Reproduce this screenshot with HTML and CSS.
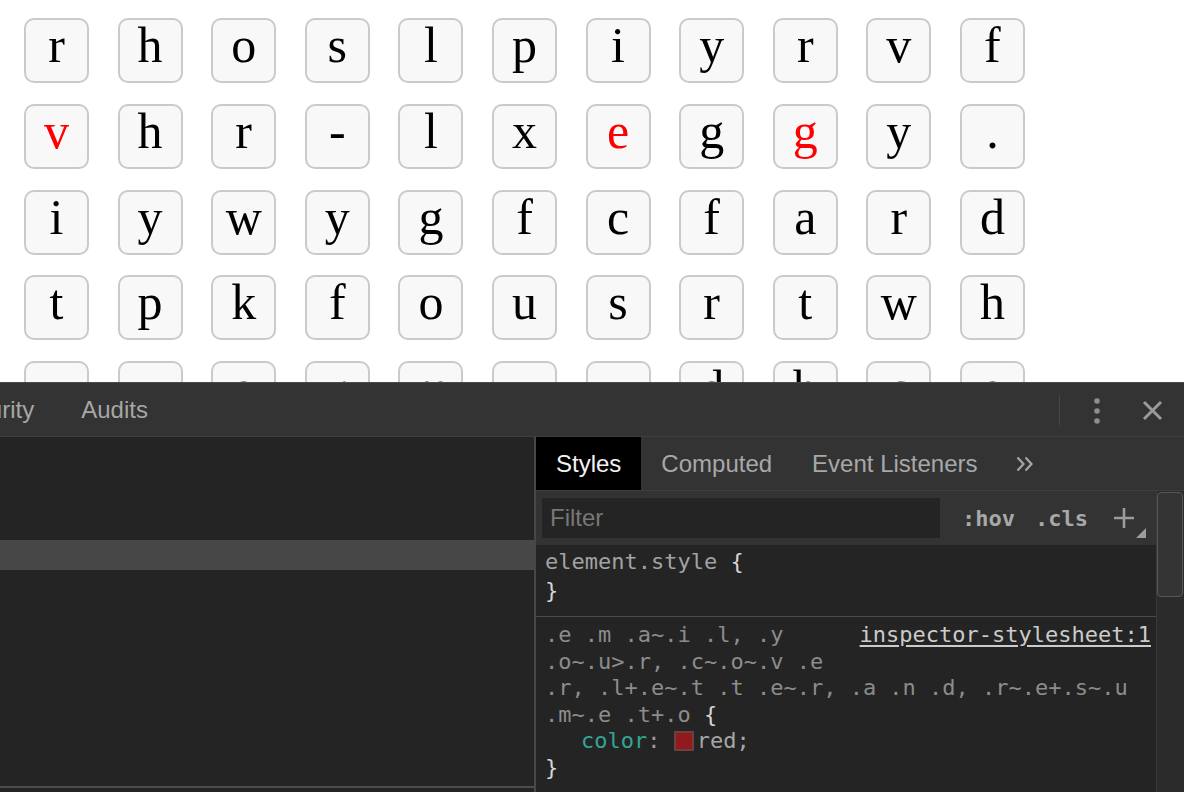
FILE: index.html
```html
<!DOCTYPE html>
<html>
<head>
<meta charset="utf-8">
<link rel="stylesheet" href="styles.css">
</head>
<body>
<div class="viewport">
  <div class="board">
    <div class="tile">r</div><div class="tile">h</div><div class="tile">o</div><div class="tile">s</div><div class="tile">l</div><div class="tile">p</div><div class="tile">i</div><div class="tile">y</div><div class="tile">r</div><div class="tile">v</div><div class="tile">f</div>
    <div class="tile hit">v</div><div class="tile">h</div><div class="tile">r</div><div class="tile">-</div><div class="tile">l</div><div class="tile">x</div><div class="tile hit">e</div><div class="tile">g</div><div class="tile hit">g</div><div class="tile">y</div><div class="tile">.</div>
    <div class="tile">i</div><div class="tile">y</div><div class="tile">w</div><div class="tile">y</div><div class="tile">g</div><div class="tile">f</div><div class="tile">c</div><div class="tile">f</div><div class="tile">a</div><div class="tile">r</div><div class="tile">d</div>
    <div class="tile">t</div><div class="tile">p</div><div class="tile">k</div><div class="tile">f</div><div class="tile">o</div><div class="tile">u</div><div class="tile">s</div><div class="tile">r</div><div class="tile">t</div><div class="tile">w</div><div class="tile">h</div>
    <div class="tile">x</div><div class="tile">u</div><div class="tile">o</div><div class="tile">r</div><div class="tile">m</div><div class="tile">v</div><div class="tile">y</div><div class="tile">d</div><div class="tile">h</div><div class="tile">c</div><div class="tile">o</div>
  </div>
</div>
<div class="devtools">
  <div class="mainbar">
    <div class="mtabs">
      <div class="mtab first">Security</div>
      <div class="mtab">Audits</div>
    </div>
    <div class="tools">
      <div class="sep"></div>
      <div class="kebab">
        <svg width="10" height="30" viewBox="0 0 10 30"><circle cx="5" cy="5" r="2.8" fill="#8e8e8e"/><circle cx="5" cy="15" r="2.8" fill="#8e8e8e"/><circle cx="5" cy="25" r="2.8" fill="#8e8e8e"/></svg>
      </div>
      <div class="close">
        <svg width="21" height="21" viewBox="0 0 21 21"><path d="M2 2 L19 19 M19 2 L2 19" stroke="#9a9a9a" stroke-width="3" fill="none"/></svg>
      </div>
    </div>
  </div>
  <div class="panes">
    <div class="left">
      <div class="lgap"></div>
      <div class="lrow"></div>
      <div class="lfill"></div>
      <div class="lfoot"></div>
    </div>
    <div class="right">
      <div class="subtabs">
        <div class="stab on">Styles</div>
        <div class="stab">Computed</div>
        <div class="stab">Event Listeners</div>
        <div class="more">
          <svg width="18" height="16" viewBox="0 0 18 16"><path d="M1.5 1.5 L7.5 8 L1.5 14.5 M9.5 1.5 L15.5 8 L9.5 14.5" stroke="#a6a6a6" stroke-width="2.2" fill="none"/></svg>
        </div>
      </div>
      <div class="stylebody">
        <div class="stylecol">
          <div class="toolbar">
            <div class="filter">Filter</div>
            <div class="pseudo">:hov</div>
            <div class="pseudo cls">.cls</div>
            <div class="plus">
              <svg width="34" height="42" viewBox="0 0 34 42"><path d="M11 11 V31 M1 21 H21" stroke="#9c9c9c" stroke-width="2.6" fill="none"/><path d="M33 31 V41 H23 Z" fill="#9c9c9c"/></svg>
            </div>
          </div>
          <div class="sec sec1">
            <div><span class="elem">element.style</span> <span class="brace">{</span></div>
            <div><span class="brace">}</span></div>
          </div>
          <div class="sec sec2">
            <div class="firstline"><span class="sel">.e .m .a~.i .l, .y</span><span class="link">inspector-stylesheet:1</span></div>
            <div class="sel">.o~.u&gt;.r, .c~.o~.v .e</div>
            <div class="sel">.r, .l+.e~.t .t .e~.r, .a .n .d, .r~.e+.s~.u</div>
            <div><span class="sel">.m~.e .t+.o</span> <span class="brace">{</span></div>
            <div class="decl"><span class="prop">color</span><span class="colon">:&nbsp;</span><span class="swatch"></span><span class="val">red;</span></div>
            <div><span class="brace">}</span></div>
          </div>
        </div>
        <div class="scroll"><div class="thumb"></div></div>
      </div>
    </div>
  </div>
</div>
</body>
</html>
```
FILE: styles.css
```css
* { box-sizing: border-box; }
html, body { margin: 0; padding: 0; }
body {
  width: 1184px;
  height: 792px;
  overflow: hidden;
  background: #fff;
  display: flex;
  flex-direction: column;
}
.viewport {
  height: 382px;
  flex: none;
  overflow: hidden;
}
.board {
  display: grid;
  grid-template-columns: repeat(11, 65px);
  grid-auto-rows: 65px;
  column-gap: 28.6px;
  row-gap: 20.75px;
  padding: 18px 0 0 24px;
}
.tile {
  border: 2px solid #cacaca;
  border-radius: 10px;
  background: #f8f8f8;
  font-family: "Liberation Serif", "Times New Roman", serif;
  font-size: 50px;
  line-height: 51px;
  text-align: center;
  color: #000;
}
.tile.hit { color: #ff0000; }

.devtools {
  flex: 1;
  display: flex;
  flex-direction: column;
  background: #242424;
  border-top: 1px solid #4b4b4b;
  font-family: "Liberation Sans", Arial, sans-serif;
  font-size: 24px;
  min-height: 0;
}
.mainbar {
  height: 54px;
  flex: none;
  background: #333;
  border-bottom: 1px solid #3e3e3e;
  display: flex;
  align-items: center;
  color: #a6a6a6;
  white-space: nowrap;
}
.mtabs { display: flex; overflow: hidden; }
.mtab { padding: 0 23.5px; flex: none; }
.mtab.first { margin-left: -76px; }
.tools {
  margin-left: auto;
  display: flex;
  align-items: center;
  margin-right: 10px;
}
.sep { width: 1px; height: 30px; background: #474747; margin-right: 11px; }
.kebab { width: 52px; height: 40px; display: flex; align-items: center; justify-content: center; padding-top: 3px; }
.close { width: 44px; height: 40px; margin-left: 7px; display: flex; align-items: center; justify-content: center; padding-top: 1px; }

.panes { flex: 1; display: flex; min-height: 0; }
.left {
  width: 536px;
  flex: none;
  border-right: 2px solid #474747;
  display: flex;
  flex-direction: column;
}
.lgap { height: 103px; flex: none; }
.lrow { height: 30px; flex: none; background: #474747; }
.lfill { flex: 1; }
.lfoot { height: 6px; flex: none; border-top: 2px solid #4d4d4d; }

.right { flex: 1; display: flex; flex-direction: column; min-width: 0; }
.subtabs {
  height: 54px;
  flex: none;
  background: #333;
  border-bottom: 1px solid #3e3e3e;
  display: flex;
  align-items: stretch;
  white-space: nowrap;
}
.stab { padding: 0 20px; display: flex; align-items: center; color: #a8a8a8; }
.stab.on { background: #000; color: #f2f2f2; }
.more { display: flex; align-items: center; padding-left: 18px; }

.stylebody { flex: 1; display: flex; min-height: 0; }
.stylecol { flex: 1; display: flex; flex-direction: column; min-width: 0; }
.scroll {
  width: 28px;
  flex: none;
  background: #2b2b2b;
  border-left: 1px solid #3a3a3a;
  padding: 1px 1px 0 0;
}
.thumb {
  height: 105px;
  background: #343434;
  border: 1px solid #575757;
  border-radius: 4px;
}

.toolbar {
  height: 54px;
  flex: none;
  background: #333;
  display: flex;
  align-items: center;
  padding-left: 6px;
}
.filter {
  width: 398px;
  height: 40px;
  background: #242424;
  color: #777;
  padding-left: 8px;
  display: flex;
  align-items: center;
}
.pseudo {
  font-family: "DejaVu Sans Mono", monospace;
  font-weight: bold;
  font-size: 22px;
  color: #a8a8a8;
  margin-left: 22px;
}
.pseudo.cls { margin-left: 20px; }
.plus { margin-left: 25px; display: flex; align-items: center; }

.sec {
  font-family: "DejaVu Sans Mono", monospace;
  font-size: 22px;
  line-height: 26.6px;
  color: #9c9c9c;
  white-space: nowrap;
}
.sec1 { padding: 3px 5px 11px 9px; line-height: 28.5px; border-bottom: 1px solid #4a4a4a; flex: none; }
.sec2 { padding: 5px 5px 0 9px; }
.brace { color: #d6d6d6; }
.elem { color: #a2a2a2; }
.sel { color: #8c8c8c; }
.firstline { display: flex; }
.link { margin-left: auto; color: #cbcbcb; text-decoration: underline; text-underline-offset: 3px; }
.decl { padding-left: 36px; }
.prop { color: #33a596; }
.colon { color: #9c9c9c; }
.val { color: #a6a6a6; }
.swatch {
  display: inline-block;
  width: 20px;
  height: 20px;
  background: #921a1c;
  border: 2px solid #6a4040;
  vertical-align: -3px;
  margin-right: 3px;
}
```
